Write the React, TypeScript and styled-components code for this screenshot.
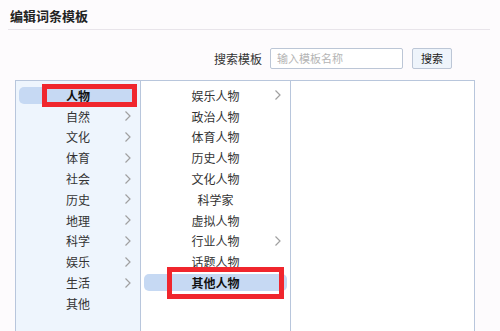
import React from "react";
import styled, { createGlobalStyle } from "styled-components";

const GlobalStyle = createGlobalStyle`
  html, body {
    margin: 0;
    padding: 0;
    background: #fdfbfd;
    font-family: "Noto Sans CJK SC", "Noto Sans", sans-serif;
    color: #333;
  }
`;

const Page = styled.div`
  width: 500px;
  height: 331px;
  overflow: hidden;
  padding: 7px 10px 0 8px;
  box-sizing: border-box;
`;

const Title = styled.h2`
  margin: 0;
  padding: 0 0 4px 2px;
  font-size: 13px;
  line-height: 18px;
  font-weight: 700;
  color: #222;
  border-bottom: 1px solid #e8e4ea;
`;

const SearchBar = styled.div`
  display: flex;
  align-items: center;
  justify-content: flex-end;
  gap: 8px;
  margin: 17px 38px 0 0;
  height: 22px;
`;

const Label = styled.span`
  font-size: 12px;
  color: #333;
`;

const Input = styled.input`
  width: 133px;
  height: 21px;
  box-sizing: border-box;
  border: 1px solid #bcc6d6;
  border-radius: 2px;
  padding: 0 6px;
  font-family: inherit;
  font-size: 11px;
  background: #fff;
  &::placeholder {
    color: #b4b4b4;
  }
`;

const Button = styled.button`
  width: 40px;
  height: 21px;
  margin-left: 1px;
  box-sizing: border-box;
  border: 1px solid #bcc6d6;
  border-radius: 2px;
  background: #eef4fb;
  font-family: inherit;
  font-size: 11px;
  color: #222;
  padding: 0;
`;

const Panel = styled.div`
  display: grid;
  grid-template-columns: 125px 150px 1fr;
  width: 460px;
  height: 270px;
  margin: 11px 0 0 7px;
  box-sizing: border-box;
  border: 1px solid #b8c6dc;
  border-bottom: none;
`;

const Column = styled.div<{ $tint?: boolean; $last?: boolean }>`
  position: relative;
  padding-top: 4px;
  background: ${(p) => (p.$tint ? "#eef5fd" : "#fff")};
  border-right: ${(p) => (p.$last ? "none" : "1px solid #b8c6dc")};
`;

const Row = styled.div<{ $active?: boolean; $bold?: boolean }>`
  position: relative;
  height: 20.8px;
  display: flex;
  align-items: center;
  justify-content: center;
  font-size: 12px;
  font-weight: ${(p) => (p.$bold ? 700 : 400)};
  color: ${(p) => (p.$bold ? "#111" : "#333")};

  &::before {
    content: "";
    display: ${(p) => (p.$active ? "block" : "none")};
    position: absolute;
    left: 3px;
    right: 3px;
    top: 2px;
    bottom: 2px;
    border-radius: 5px;
    background: #c6d9f3;
  }
`;

const RowText = styled.span`
  position: relative;
`;

const Chevron = styled.svg`
  position: absolute;
  right: 8px;
  top: 50%;
  margin-top: -6px;
  width: 8px;
  height: 12px;
`;

const Mark = styled.div<{ $l: number; $r: number; $t: number; $b: number }>`
  position: absolute;
  left: ${(p) => p.$l}px;
  right: ${(p) => p.$r}px;
  top: ${(p) => p.$t}px;
  bottom: ${(p) => p.$b}px;
  border: 5px solid #f0262d;
  box-sizing: border-box;
`;

const Arrow = () => (
  <Chevron viewBox="0 0 8 12">
    <polyline points="1.5,1.5 6,6 1.5,10.5" fill="none" stroke="#a0a0a0" strokeWidth="1.2" />
  </Chevron>
);

type Item = { name: string; more?: boolean };

const categories: Item[] = [
  { name: "人物" },
  { name: "自然", more: true },
  { name: "文化", more: true },
  { name: "体育", more: true },
  { name: "社会", more: true },
  { name: "历史", more: true },
  { name: "地理", more: true },
  { name: "科学", more: true },
  { name: "娱乐", more: true },
  { name: "生活", more: true },
  { name: "其他" },
];

const people: Item[] = [
  { name: "娱乐人物", more: true },
  { name: "政治人物" },
  { name: "体育人物" },
  { name: "历史人物" },
  { name: "文化人物" },
  { name: "科学家" },
  { name: "虚拟人物" },
  { name: "行业人物", more: true },
  { name: "话题人物" },
  { name: "其他人物" },
];

export default function App() {
  return (
    <>
      <GlobalStyle />
      <Page>
        <Title>编辑词条模板</Title>
        <SearchBar>
          <Label>搜索模板</Label>
          <Input placeholder="输入模板名称" />
          <Button>搜索</Button>
        </SearchBar>
        <Panel>
          <Column $tint>
            {categories.map((c, i) => (
              <Row key={c.name} $active={i === 0} $bold={i === 0}>
                <RowText>{c.name}</RowText>
                {c.more && <Arrow />}
                {i === 0 && <Mark $l={26} $r={3} $t={-1} $b={-1} />}
              </Row>
            ))}
          </Column>
          <Column>
            {people.map((c, i) => (
              <Row key={c.name} $active={i === 9} $bold={i === 9}>
                <RowText>{c.name}</RowText>
                {c.more && <Arrow />}
                {i === 9 && <Mark $l={26} $r={6} $t={-5} $b={-6} />}
              </Row>
            ))}
          </Column>
          <Column $last />
        </Panel>
      </Page>
    </>
  );
}
